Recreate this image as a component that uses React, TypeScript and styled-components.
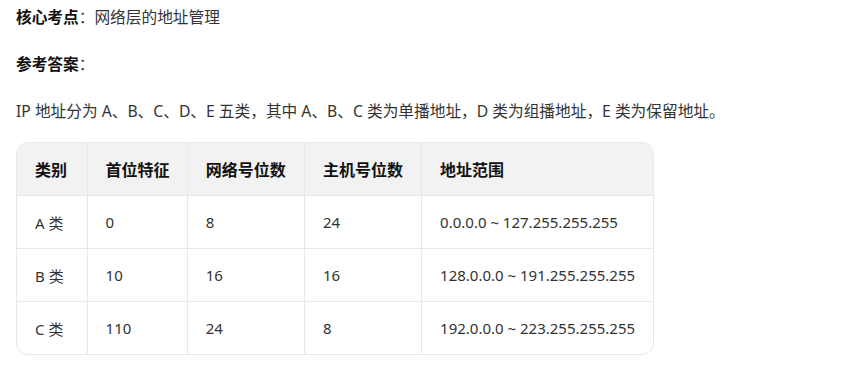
import React from "react";
import styled, { createGlobalStyle } from "styled-components";

const GlobalStyle = createGlobalStyle`
  body {
    margin: 0;
    background: #ffffff;
    font-family: "Noto Sans", "Noto Sans CJK SC", sans-serif;
    color: #333333;
  }
`;

type RowType = {
  kind: string;
  prefix: string;
  net: string;
  host: string;
  range: string;
};

const rows: RowType[] = [
  { kind: "A 类", prefix: "0", net: "8", host: "24", range: "0.0.0.0 ~ 127.255.255.255" },
  { kind: "B 类", prefix: "10", net: "16", host: "16", range: "128.0.0.0 ~ 191.255.255.255" },
  { kind: "C 类", prefix: "110", net: "24", host: "8", range: "192.0.0.0 ~ 223.255.255.255" },
];

const headers = ["类别", "首位特征", "网络号位数", "主机号位数", "地址范围"];
const widths = [70, 100, 117, 117, 231];

export default function App() {
  return (
    <>
      <GlobalStyle />
      <Page>
        <Para>
          <Label>核心考点</Label>：网络层的地址管理
        </Para>
        <Para>
          <Label>参考答案</Label>：
        </Para>
        <Para>IP 地址分为 A、B、C、D、E 五类，其中 A、B、C 类为单播地址，D 类为组播地址，E 类为保留地址。</Para>
        <TableWrap>
          <Table>
            <colgroup>
              {widths.map((w, i) => (
                <col key={i} style={{ width: w }} />
              ))}
            </colgroup>
            <thead>
              <tr>
                {headers.map((h) => (
                  <Th key={h}>{h}</Th>
                ))}
              </tr>
            </thead>
            <tbody>
              {rows.map((r) => (
                <tr key={r.kind}>
                  <Td>{r.kind}</Td>
                  <Td>{r.prefix}</Td>
                  <Td>{r.net}</Td>
                  <Td>{r.host}</Td>
                  <Td>{r.range}</Td>
                </tr>
              ))}
            </tbody>
          </Table>
        </TableWrap>
      </Page>
    </>
  );
}

const Page = styled.div`
  padding: 6px 16px 16px;
`;

const Para = styled.p`
  margin: 0 0 25px;
  font-size: 15.7px;
  line-height: 22px;
  color: #333333;
  white-space: nowrap;
`;

const Label = styled.strong`
  font-weight: 700;
  color: #111111;
`;

const TableWrap = styled.div`
  margin-top: -5px;
  width: 636px;
  border: 1px solid #e8e8e8;
  border-radius: 12px;
  overflow: hidden;
`;

const Table = styled.table`
  width: 100%;
  border-collapse: collapse;
  table-layout: fixed;
`;

const Th = styled.th`
  height: 52px;
  padding: 0 0 0 18px;
  background: #f2f2f2;
  text-align: left;
  font-size: 16px;
  font-weight: 700;
  color: #111111;
  white-space: nowrap;
  border-right: 1px solid #e8e8e8;
  border-bottom: 1px solid #e8e8e8;

  &:last-child {
    border-right: none;
  }
`;

const Td = styled.td`
  height: 52px;
  padding: 0 0 0 18px;
  font-size: 15px;
  color: #333333;
  white-space: nowrap;
  border-right: 1px solid #e8e8e8;
  border-bottom: 1px solid #e8e8e8;

  &:last-child {
    border-right: none;
  }

  tr:last-child > & {
    border-bottom: none;
  }
`;
